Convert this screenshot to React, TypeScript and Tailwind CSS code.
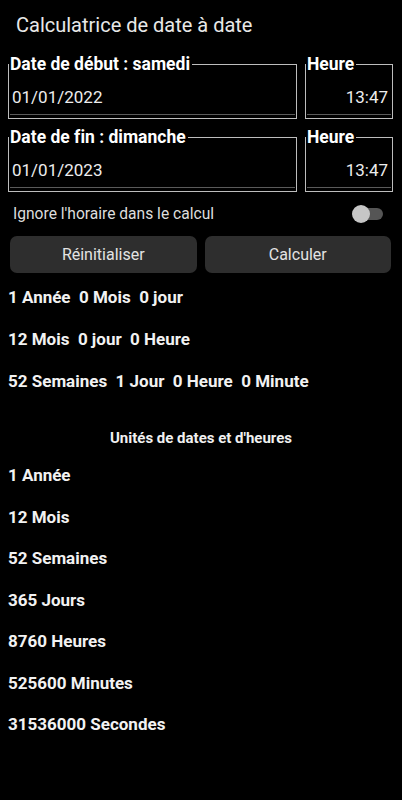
import React from "react";

const summary = [
  "1 Année  0 Mois  0 jour",
  "12 Mois  0 jour  0 Heure",
  "52 Semaines  1 Jour  0 Heure  0 Minute",
];

const units = [
  "1 Année",
  "12 Mois",
  "52 Semaines",
  "365 Jours",
  "8760 Heures",
  "525600 Minutes",
  "31536000 Secondes",
];

function Field({ label, value, right }: { label: string; value: string; right?: boolean }) {
  return (
    <fieldset className={`border border-[#bdbdbd] px-0 ${right ? "w-[88px]" : "flex-1"}`}>
      <legend className="pl-[1px] pr-[2px] text-[17.5px] leading-[20px] font-bold text-white">{label}</legend>
      <div className={`pt-[13px] px-[3px] text-[17px] leading-[20px] text-[#ededed] ${right ? "text-right pr-[4px]" : ""}`}>
        {value}
      </div>
      <div className="mx-[1px] mt-[7px] mb-[3px] h-px bg-[#5a5a5a]" />
    </fieldset>
  );
}

export default function App() {
  return (
    <div className="min-h-screen w-[402px] bg-black text-white font-['Roboto',sans-serif] [font-variant-ligatures:none]">
      <h1 className="pl-4 pt-[11px] text-[20px] leading-7 text-[#e8e8e8]">Calculatrice de date à date</h1>

      <div className="mt-[15px] flex gap-2 pl-2 pr-[9px]">
        <Field label="Date de début : samedi" value="01/01/2022" />
        <Field label="Heure" value="13:47" right />
      </div>
      <div className="mt-[8px] flex gap-2 pl-2 pr-[9px]">
        <Field label="Date de fin : dimanche" value="01/01/2023" />
        <Field label="Heure" value="13:47" right />
      </div>

      <div className="mt-[12px] flex items-center justify-between pl-[13px] pr-[19px]">
        <span className="text-[15.6px] leading-5 text-[#dddddd]">Ignore l'horaire dans le calcul</span>
        <div className="relative h-[18px] w-[31px]">
          <div className="absolute right-0 top-[3px] h-[12px] w-[26px] rounded-full bg-[#555555]" />
          <div className="absolute left-0 top-0 h-[18px] w-[18px] rounded-full bg-[#c6c6c6]" />
        </div>
      </div>

      <div className="mt-[12px] flex gap-[8px] pl-[10px] pr-[11px]">
        <button className="h-[37px] flex-1 rounded-[7px] bg-[#2e2e2e] text-[16px] text-[#e3e3e3]">Réinitialiser</button>
        <button className="h-[37px] flex-1 rounded-[7px] bg-[#2e2e2e] text-[16px] text-[#e3e3e3]">Calculer</button>
      </div>

      <div className="mt-[4px] px-2">
        {summary.map((s) => (
          <div key={s} className="flex h-[42px] items-center whitespace-pre text-[17px] font-bold text-[#f2f2f2]">
            {s}
          </div>
        ))}
      </div>

      <h2 className="mt-[18px] text-center text-[15px] leading-[34px] font-bold text-[#f0f0f0]">Unités de dates et d'heures</h2>

      <div className="px-2">
        {units.map((u) => (
          <div key={u} className="flex h-[41.5px] items-center text-[17px] font-bold text-[#f2f2f2]">
            {u}
          </div>
        ))}
      </div>
    </div>
  );
}
